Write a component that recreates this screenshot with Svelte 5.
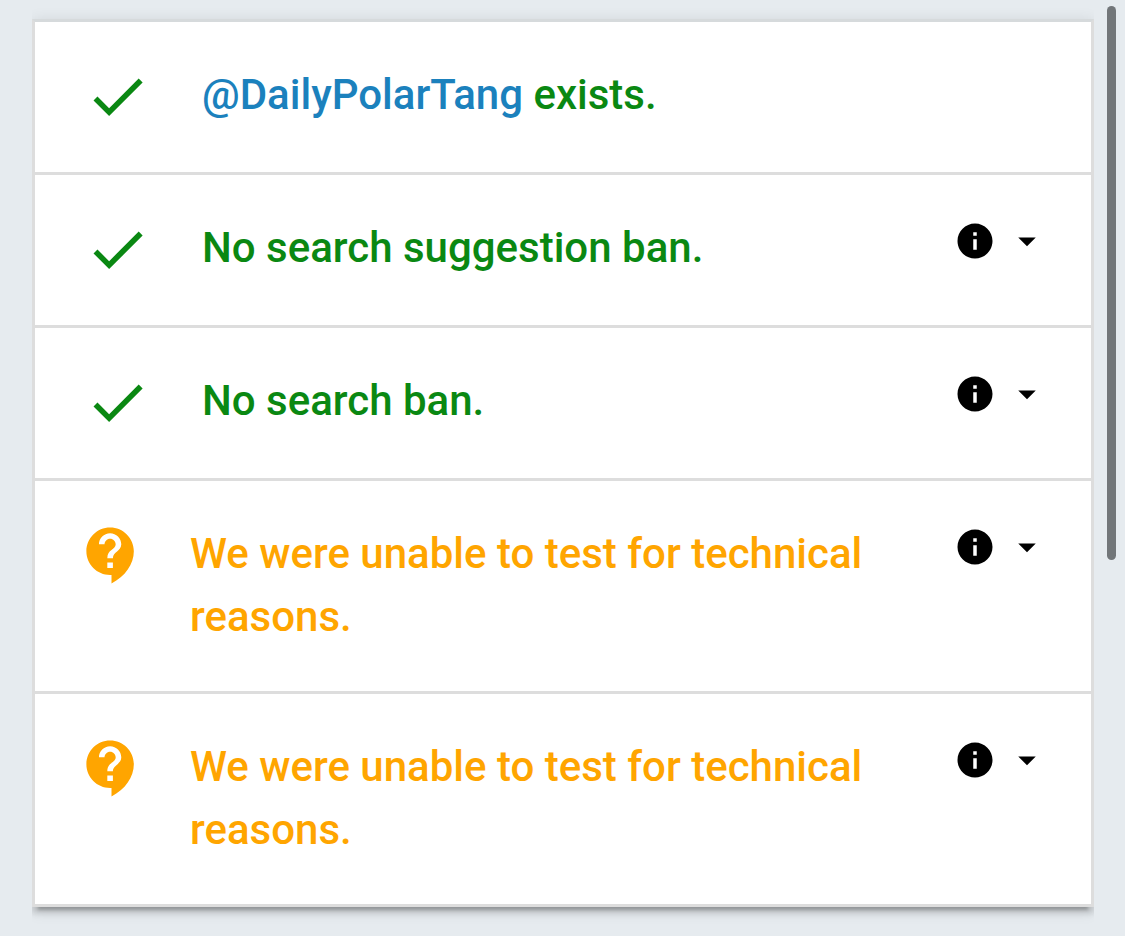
<script lang="ts">
    type Status = 'passed' | 'unknown';

    interface TestResult {
        status: Status;
        text: string;
        handle?: string;
        expandable: boolean;
    }

    const UNABLE = 'We were unable to test for technical reasons.';

    const results: TestResult[] = [
        { status: 'passed', handle: 'DailyPolarTang', text: 'exists.', expandable: false },
        { status: 'passed', text: 'No search suggestion ban.', expandable: true },
        { status: 'passed', text: 'No search ban.', expandable: true },
        { status: 'unknown', text: UNABLE, expandable: true },
        { status: 'unknown', text: UNABLE, expandable: true },
    ];

    // Material icon outlines on a 24x24 grid
    const ICONS: Record<Status, string> = {
        passed: 'M9 16.17L4.83 12l-1.42 1.41L9 19 21 7l-1.41-1.41z',
        unknown:
            'M11.5 2C6.81 2 3 5.81 3 10.5S6.81 19 11.5 19h.5v3c4.86-2.34 8-7 8-11.5C20 5.81 16.19 2 11.5 2zm1 14.5h-2v-2h2v2zm0-3.5h-2c0-3.25 3-3 3-5 0-1.1-.9-2-2-2s-2 .9-2 2h-2c0-2.21 1.79-4 4-4s4 1.79 4 4c0 2.5-3 2.75-3 5z',
    };
    const INFO = 'M12 2C6.48 2 2 6.48 2 12s4.48 10 10 10 10-4.48 10-10S17.52 2 12 2zm1 15h-2v-6h2v6zm0-8h-2V7h2v2z';
    const CARET = 'M7 10l5 5 5-5z';
</script>

<main>
    <ul class="results">
        {#each results as result}
            <li class="result {result.status}">
                <svg class="status-icon" viewBox="0 0 24 24" aria-hidden="true">
                    <path d={ICONS[result.status]} />
                </svg>
                <p class="message">
                    {#if result.handle}
                        <a href="https://twitter.com/{result.handle}">@{result.handle}</a>
                    {/if}
                    {result.text}
                </p>
                {#if result.expandable}
                    <button class="details" type="button" aria-label="More about this test">
                        <svg viewBox="0 0 24 24" aria-hidden="true"><path d={INFO} /></svg>
                        <svg viewBox="0 0 24 24" aria-hidden="true"><path d={CARET} /></svg>
                    </button>
                {/if}
            </li>
        {/each}
    </ul>
</main>

<div class="scroll-track" aria-hidden="true">
    <div class="scroll-thumb"></div>
</div>

<style>
    :global(body) {
        margin: 0;
        background: #e6ebef;
    }

    main {
        padding: 19px 31px 29px 32px;
        font-family: Roboto, sans-serif;
    }

    .results {
        margin: 0;
        padding: 0;
        list-style: none;
        background: #fff;
        border: 3px solid #ddd;
        border-top-color: #d6dadc;
        box-shadow:
            0 6px 6px rgba(0, 0, 0, 0.14),
            0 9px 3px -6px rgba(0, 0, 0, 0.2),
            0 3px 15px rgba(0, 0, 0, 0.12);
        /* keep the shadow above and below only */
        clip-path: inset(-24px 0);
    }

    .result {
        display: flex;
        align-items: flex-start;
        box-sizing: border-box;
        min-height: 150px;
        padding: 41px 43px 43px 49px;
        gap: 51px;
        fill: currentColor;
    }

    .result + .result {
        min-height: 153px;
        border-top: 3px solid #ddd;
    }

    .passed {
        color: #0a8812;
    }

    .unknown {
        padding-left: 43px;
        gap: 45px;
        color: #ffa500;
    }

    /* the icon is taller than a text line and must not stretch the row */
    .status-icon {
        flex: none;
        width: 67px;
        height: 67px;
        margin-bottom: -4px;
    }

    .message {
        flex: 1;
        margin: 0;
        font-size: 42px;
        font-weight: 500;
        line-height: 63px;
    }

    .message a {
        color: #1b81bd;
        text-decoration: none;
    }

    .details {
        display: flex;
        flex: none;
        gap: 10px;
        margin: 4px 0 0;
        padding: 0;
        border: 0;
        background: none;
        color: #000;
        fill: currentColor;
        cursor: pointer;
    }

    .details svg {
        width: 42px;
        height: 42px;
    }

    .scroll-track {
        position: fixed;
        top: 6px;
        right: 9px;
        bottom: 6px;
        width: 9px;
    }

    .scroll-thumb {
        height: 60%;
        border-radius: 5px;
        background: #727679;
    }
</style>
